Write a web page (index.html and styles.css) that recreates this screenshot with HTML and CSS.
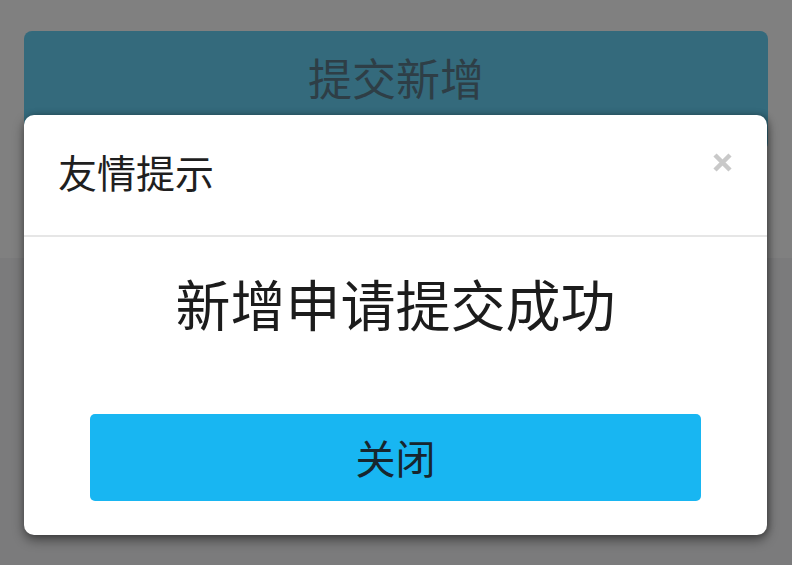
FILE: index.html
```html
<!DOCTYPE html>
<html lang="zh-CN">
<head>
<meta charset="utf-8">
<title>友情提示</title>
<link rel="stylesheet" href="styles.css">
</head>
<body>
<div class="page">
  <div class="page-top">
    <div class="submit-bar">提交新增</div>
  </div>
  <div class="page-rest"></div>
</div>
<div class="modal">
  <div class="modal-header">
    <div class="modal-title">友情提示</div>
    <svg class="modal-close" width="21" height="21" viewBox="0 0 21 21" aria-label="关闭">
      <path d="M3 3 L18 18 M18 3 L3 18" stroke="#c9c9c9" stroke-width="4.5" stroke-linecap="butt" fill="none"/>
    </svg>
  </div>
  <div class="modal-body">
    <div class="modal-message">新增申请提交成功</div>
    <div class="modal-button">关闭</div>
  </div>
</div>
</body>
</html>
```
FILE: styles.css
```css
html, body {
  margin: 0;
  padding: 0;
}
body {
  width: 792px;
  height: 565px;
  overflow: hidden;
  background: #7b7b7c;
  font-family: "Noto Sans CJK SC", "Noto Sans", sans-serif;
  position: relative;
}
.page {
  display: flex;
  flex-direction: column;
  height: 565px;
}
.page-top {
  height: 258px;
  box-sizing: border-box;
  padding: 31px 24px 0;
  background: #808080;
}
.page-rest {
  flex: 1;
  background: #7b7b7c;
}
.submit-bar {
  height: 120px;
  border-radius: 8px;
  background: #346a7c;
  color: #2e3e46;
  font-size: 44px;
  line-height: 92px;
  text-align: center;
}
.modal {
  position: absolute;
  left: 24px;
  top: 115px;
  width: 743px;
  height: 420px;
  background: #ffffff;
  border-radius: 10px;
  box-shadow: 0 5px 12px rgba(0, 0, 0, 0.45), 2px 0 6px rgba(0, 0, 0, 0.25);
  display: flex;
  flex-direction: column;
}
.modal-header {
  height: 122px;
  box-sizing: border-box;
  padding: 36px 34px 0 34px;
  border-bottom: 2px solid #e6e6e6;
  display: flex;
  justify-content: space-between;
  align-items: flex-start;
}
.modal-title {
  font-size: 39px;
  line-height: 40px;
  color: #1f1f1f;
}
.modal-close {
  margin-top: 1px;
  display: block;
}
.modal-body {
  flex: 1;
  display: flex;
  flex-direction: column;
  padding: 33px 66px 34px;
}
.modal-message {
  font-size: 55px;
  line-height: 64px;
  color: #1c1c1c;
  text-align: center;
}
.modal-button {
  margin-top: auto;
  height: 87px;
  border-radius: 5px;
  background: #18b6f2;
  color: #17262e;
  font-size: 40px;
  line-height: 87px;
  text-align: center;
}
```
